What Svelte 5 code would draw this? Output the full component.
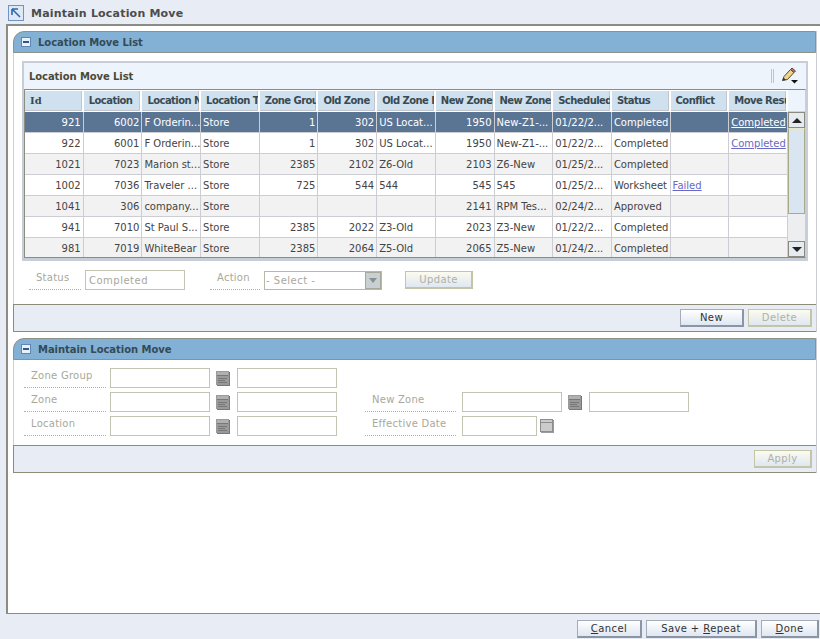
<script>
  const cols = ['Id','Location','Location N','Location Ty','Zone Group','Old Zone','Old Zone N','New Zone','New Zone I','Scheduled I','Status','Conflict','Move Resu'];
  const rows = [
    ['921','6002','F Orderin...','Store','1','302','US Locat...','1950','New-Z1-...','01/22/2...','Completed','','Completed'],
    ['922','6001','F Orderin...','Store','1','302','US Locat...','1950','New-Z1-...','01/22/2...','Completed','','Completed'],
    ['1021','7023','Marion st...','Store','2385','2102','Z6-Old','2103','Z6-New','01/25/2...','Completed','',''],
    ['1002','7036','Traveler ...','Store','725','544','544','545','545','01/25/2...','Worksheet','Failed',''],
    ['1041','306','company...','Store','','','','2141','RPM Tes...','02/24/2...','Approved','',''],
    ['941','7010','St Paul S...','Store','2385','2022','Z3-Old','2023','Z3-New','01/22/2...','Completed','',''],
    ['981','7019','WhiteBear','Store','2385','2064','Z5-Old','2065','Z5-New','01/24/2...','Completed','','']
  ];
  const right = [0,1,4,5,7];
</script>

{#snippet lov()}
  <svg class="lov" width="14" height="15" viewBox="0 0 14 15">
    <rect x="1" y="1" width="13" height="14" fill="#77777f"/>
    <rect x="0" y="0" width="13" height="14" fill="#9a9a9a"/>
    <rect x="1" y="1" width="11" height="3" fill="#b0b0b0"/>
    <path d="M1 4.500h11M2 7.500h9M2 9.500h7M2 11.500h9" stroke="#777" fill="none"/>
  </svg>
{/snippet}

{#snippet panelHead(title)}
  <div class="phead">
    <span class="toggle"><span></span></span>
    <span>{title}</span>
  </div>
{/snippet}

<div class="page">
  <header class="top">
    <svg width="16" height="16" viewBox="0 0 16 16">
      <rect x="0.5" y="0.5" width="15" height="15" fill="#dfe9f6" stroke="#6f94c4"/>
      <path d="M4 4h6M4 4v6M4 4l8 8" stroke="#2f68ad" stroke-width="1.6" fill="none"/>
    </svg>
    <span>Maintain Location Move</span>
  </header>

  <main class="frame">
    <section class="panel">
      {@render panelHead('Location Move List')}
      <div class="pbody">
        <div class="grid">
          <div class="gtitle">
            <span>Location Move List</span>
            <span class="tools">
              <span class="sep"></span>
              <svg width="18" height="18" viewBox="0 0 18 18">
                <path d="M1.500 13.500L3 9.500 9.500 2.500l3.500 3L6.500 12.500z" fill="#f2d488" stroke="#4a4a3a"/>
                <path d="M9.500 2.500l1.500-1.500 3.500 3L13 5.500z" fill="#d8605f" stroke="#5a4a4a"/>
                <path d="M1.500 13.500L2.500 10.500l2.500 2.500z" fill="#333"/>
                <path d="M10 13h7l-3.500 3.500z" fill="#111"/>
              </svg>
            </span>
          </div>
          <div class="gbody">
            <table>
              <colgroup>{#each cols as _c}<col class="cw" />{/each}</colgroup>
              <thead>
                <tr>{#each cols as c, i}<th class:first={i === 0}><div>{c}</div></th>{/each}</tr>
              </thead>
              <tbody>
                {#each rows as r, ri}
                  <tr class:sel={ri === 0} class:alt={ri % 2 === 0}>
                    {#each r as v, i}
                      <td class:r={right.includes(i)}>
                        {#if (i === 12 || i === 11) && v}<a href="#x">{v}</a>{:else}{v}{/if}
                      </td>
                    {/each}
                  </tr>
                {/each}
              </tbody>
            </table>
            <div class="sbar">
              <div class="scorner"></div>
              <div class="sbtn"><i class="up"></i></div>
              <div class="strack"><div class="thumb"></div></div>
              <div class="sbtn"><i class="down"></i></div>
            </div>
          </div>
        </div>
        <div class="update">
          <div class="lbl sm">Status</div>
          <div class="input w100 val">Completed</div>
          <div class="lbl sm2">Action</div>
          <div class="select">
            <span>- Select -</span>
            <i><b></b></i>
          </div>
          <button class="btn dis upd">Update</button>
        </div>
      </div>
      <div class="pfoot">
        <button class="btn">New</button>
        <button class="btn dis">Delete</button>
      </div>
    </section>

    <section class="panel second">
      {@render panelHead('Maintain Location Move')}
      <div class="form">
        <div class="fcol">
          <div class="frow"><div class="lbl l1">Zone Group</div><div class="input w100"></div>{@render lov()}<div class="input w100"></div></div>
          <div class="frow"><div class="lbl l1">Zone</div><div class="input w100"></div>{@render lov()}<div class="input w100"></div></div>
          <div class="frow"><div class="lbl l1">Location</div><div class="input w100"></div>{@render lov()}<div class="input w100"></div></div>
        </div>
        <div class="fcol c2">
          <div class="frow"><div class="lbl l2">New Zone</div><div class="input w100"></div>{@render lov()}<div class="input w100"></div></div>
          <div class="frow"><div class="lbl l2">Effective Date</div><div class="input w75"></div>
            <svg class="cal" width="14" height="14" viewBox="0 0 14 14">
              <rect x="1" y="1" width="13" height="13" fill="#9a9aa4"/>
              <rect x="0.5" y="0.5" width="12" height="12" fill="#cbcbcb" stroke="#8d8d8d"/>
              <path d="M1 3.500h11" stroke="#8d8d8d"/>
            </svg>
          </div>
        </div>
      </div>
      <div class="pfoot">
        <button class="btn dis apply">Apply</button>
      </div>
    </section>
  </main>

  <footer class="bottom">
    <button class="btn act"><u>C</u>ancel</button>
    <button class="btn act save">Save + <u>R</u>epeat</button>
    <button class="btn act done"><u>D</u>one</button>
  </footer>
</div>

<style>
  :global(body) { margin: 0; background: #e8edf5; }
  .page {
    width: 820px; height: 639px; overflow: hidden; background: #e8edf5;
    font: 10px "DejaVu Sans", Verdana, sans-serif; color: #333;
    display: flex; flex-direction: column;
  }
  .top {
    height: 24px; flex: none; display: flex; align-items: center; gap: 7px;
    padding: 2px 0 0 8px; box-sizing: border-box;
    font-weight: bold; font-size: 11px; color: #4c4c4c; letter-spacing: 0.2px;
  }
  .frame {
    margin: 0 0 0 6px; width: 814px; height: 590px; box-sizing: border-box; flex: none;
    border: 2px solid #8c8c84; border-right: 0; border-bottom-width: 1px; background: #fff;
    padding: 5px 3px 0 5px;
  }
  .panel { border-right: 1px solid #c9ccd1; }
  .second { margin-top: 6px; }
  .phead {
    height: 22px; box-sizing: border-box; background: #82b1d5;
    border: 1px solid #8c9189; border-top-left-radius: 11px;
    display: flex; align-items: center; padding-left: 7px; gap: 7px;
    font-weight: bold; color: #354a54; letter-spacing: -0.05px;
  }
  .toggle {
    width: 10px; height: 10px; box-sizing: border-box; background: #e8f0fa; border: 1px solid #5e86b5;
    display: flex; align-items: center; justify-content: center;
  }
  .toggle span { width: 6px; height: 2px; background: #35577f; }
  .pbody { border-left: 1px solid #ccd0d6; padding: 8px 0 0 8px; height: 251px; box-sizing: border-box; }
  .grid { width: 786px; height: 200px; box-sizing: border-box; border: 2px solid #c8ced8; border-bottom-width: 3px; background: #eef4fc; }
  .gtitle {
    height: 26px; box-sizing: border-box; display: flex; align-items: center; justify-content: space-between;
    padding: 0 7px 0 5px; font-weight: bold; color: #4a4a38; letter-spacing: -0.08px;
  }
  .tools { display: flex; align-items: center; gap: 7px; }
  .sep { width: 1px; height: 14px; border-left: 1px solid #c0c4c8; border-right: 1px solid #c0c4c8; }
  .gbody { display: flex; height: 169px; box-sizing: border-box; background: #fff; border: 1px solid #8c8c84; border-right-color: #c8ced8; overflow: hidden; }
  table { border-collapse: separate; border-spacing: 0; table-layout: fixed; width: 763px; flex: none; }
  .cw { width: 58.69px; }
  th {
    padding: 0 0 2px; height: 22px; box-sizing: border-box; background: #cfe0ef;
    border: 1px solid #fff; border-right-width: 2px; border-left-width: 0;
    box-shadow: inset -1px -1px 0 #c2c6cc;
    font-weight: bold; color: #394a52; overflow: hidden; letter-spacing: -0.55px;
  }
  th div { white-space: nowrap; overflow: hidden; padding: 0 1px 0 5px; text-align: left; }
  th.first div { font-family: "DejaVu Serif", serif; letter-spacing: 0; }
  td {
    padding: 0 2px; height: 21px; box-sizing: border-box; border: solid #ccced3; border-width: 0 1px 1px 0;
    white-space: nowrap; overflow: hidden; color: #444;
  }
  td.r { text-align: right; }
  tr.alt td { background: #f2f2f2; }
  tr.sel td { background: #5a7494; color: #fff; }
  a { color: #6868c8; }
  tr.sel a { color: #fff; }
  .sbar { width: 17px; flex: none; display: flex; flex-direction: column; background: #eceef0; }
  .scorner { height: 22px; flex: none; background: #eef4fc; border-bottom: 1px solid #cfd4d8; box-sizing: border-box; }
  .sbtn {
    height: 16px; flex: none; background: #e6ebf0; border: 1px solid #8a8a80; box-sizing: border-box;
    display: flex; align-items: center; justify-content: center;
  }
  .sbtn i { width: 0; height: 0; border: 5px solid transparent; }
  .up { border-bottom-color: #222 !important; border-top-width: 0 !important; }
  .down { border-top-color: #222 !important; border-bottom-width: 0 !important; }
  .strack { flex: 1; }
  .thumb { height: 86px; background: #d9e6f2; border: 1px solid #a8ab8a; border-top-color: #e8e8c8; box-sizing: border-box; }
  .update { display: flex; align-items: center; height: 20px; margin-top: 9px; }
  .lbl {
    color: #a8a89c; letter-spacing: 0.25px; border-bottom: 1px dotted #b0b0a8; box-sizing: border-box; height: 20px;
    padding-top: 2px; flex: none;
  }
  .lbl.sm { width: 52px; padding-left: 7px; margin-left: 7px; margin-right: 4px; }
  .lbl.sm2 { width: 50px; padding-left: 7px; margin-left: 25px; margin-right: 4px; }
  .input { height: 20px; border: 1px solid #c4c4b4; background: #fff; box-sizing: border-box; flex: none; color: #a8a89c; padding: 4px 3px 0; letter-spacing: 0.5px; }
  .w100 { width: 100px; }
  .w75 { width: 75px; }
  .select {
    width: 118px; height: 19px; box-sizing: border-box; border: 1px solid #b8b8a8; display: flex; align-items: center;
    justify-content: space-between; padding-left: 1px; color: #a8a89c; letter-spacing: 0.5px;
  }
  .select i { width: 16px; height: 17px; background: #c8d0d4; border: 1px solid #a8a898; box-sizing: border-box; display: flex; align-items: center; justify-content: center; }
  .select b { width: 0; height: 0; border: 4px solid transparent; border-top: 5px solid #8a8f8f; border-bottom: 0; }
  .btn {
    font: 10px "DejaVu Sans", Verdana, sans-serif; letter-spacing: 0.4px; color: #333; height: 18px; box-sizing: border-box; padding: 0;
    background: linear-gradient(#fff, #dfe7f1); border: 1px solid #a4acb8; border-right: 2px solid #8a95a6; border-bottom: 2px solid #8a95a6; width: 64px;
  }
  .btn.dis { color: #b0b0a8; border-color: #c4c4a8; background: linear-gradient(#fbfbef, #dfe7f1); }
  .upd { width: 68px; margin-left: 23px; }
  .pfoot {
    height: 28px; box-sizing: border-box; background: #e8edf5; border: 1px solid #8c8c78; border-right: 0;
    display: flex; align-items: center; justify-content: flex-end; gap: 4px; padding-right: 4px;
  }
  .apply { width: 58px; }
  .form { display: flex; height: 85px; box-sizing: border-box; padding-top: 8px; border-left: 1px solid #ccd0d6; }
  .fcol { display: flex; flex-direction: column; gap: 4px; }
  .c2 { margin-left: 19px; padding-top: 24px; }
  .frow { display: flex; align-items: flex-start; height: 20px; }
  .lbl.l1 { width: 82px; padding-left: 7px; margin-left: 10px; margin-right: 4px; }
  .lbl.l2 { width: 91px; padding-left: 7px; margin-left: 9px; margin-right: 6px; }
  .lov { margin: 3px 7px 0 6px; flex: none; }
  .cal { margin: 3px 0 0 3px; }
  .bottom {
    flex: 1; display: flex; justify-content: flex-end; align-items: flex-start; gap: 4px;
    padding: 6px 1px 0 0;
  }
  .act { width: 65px; height: 18px; }
  .save { width: 111px; }
  .done { width: 58px; }
</style>
